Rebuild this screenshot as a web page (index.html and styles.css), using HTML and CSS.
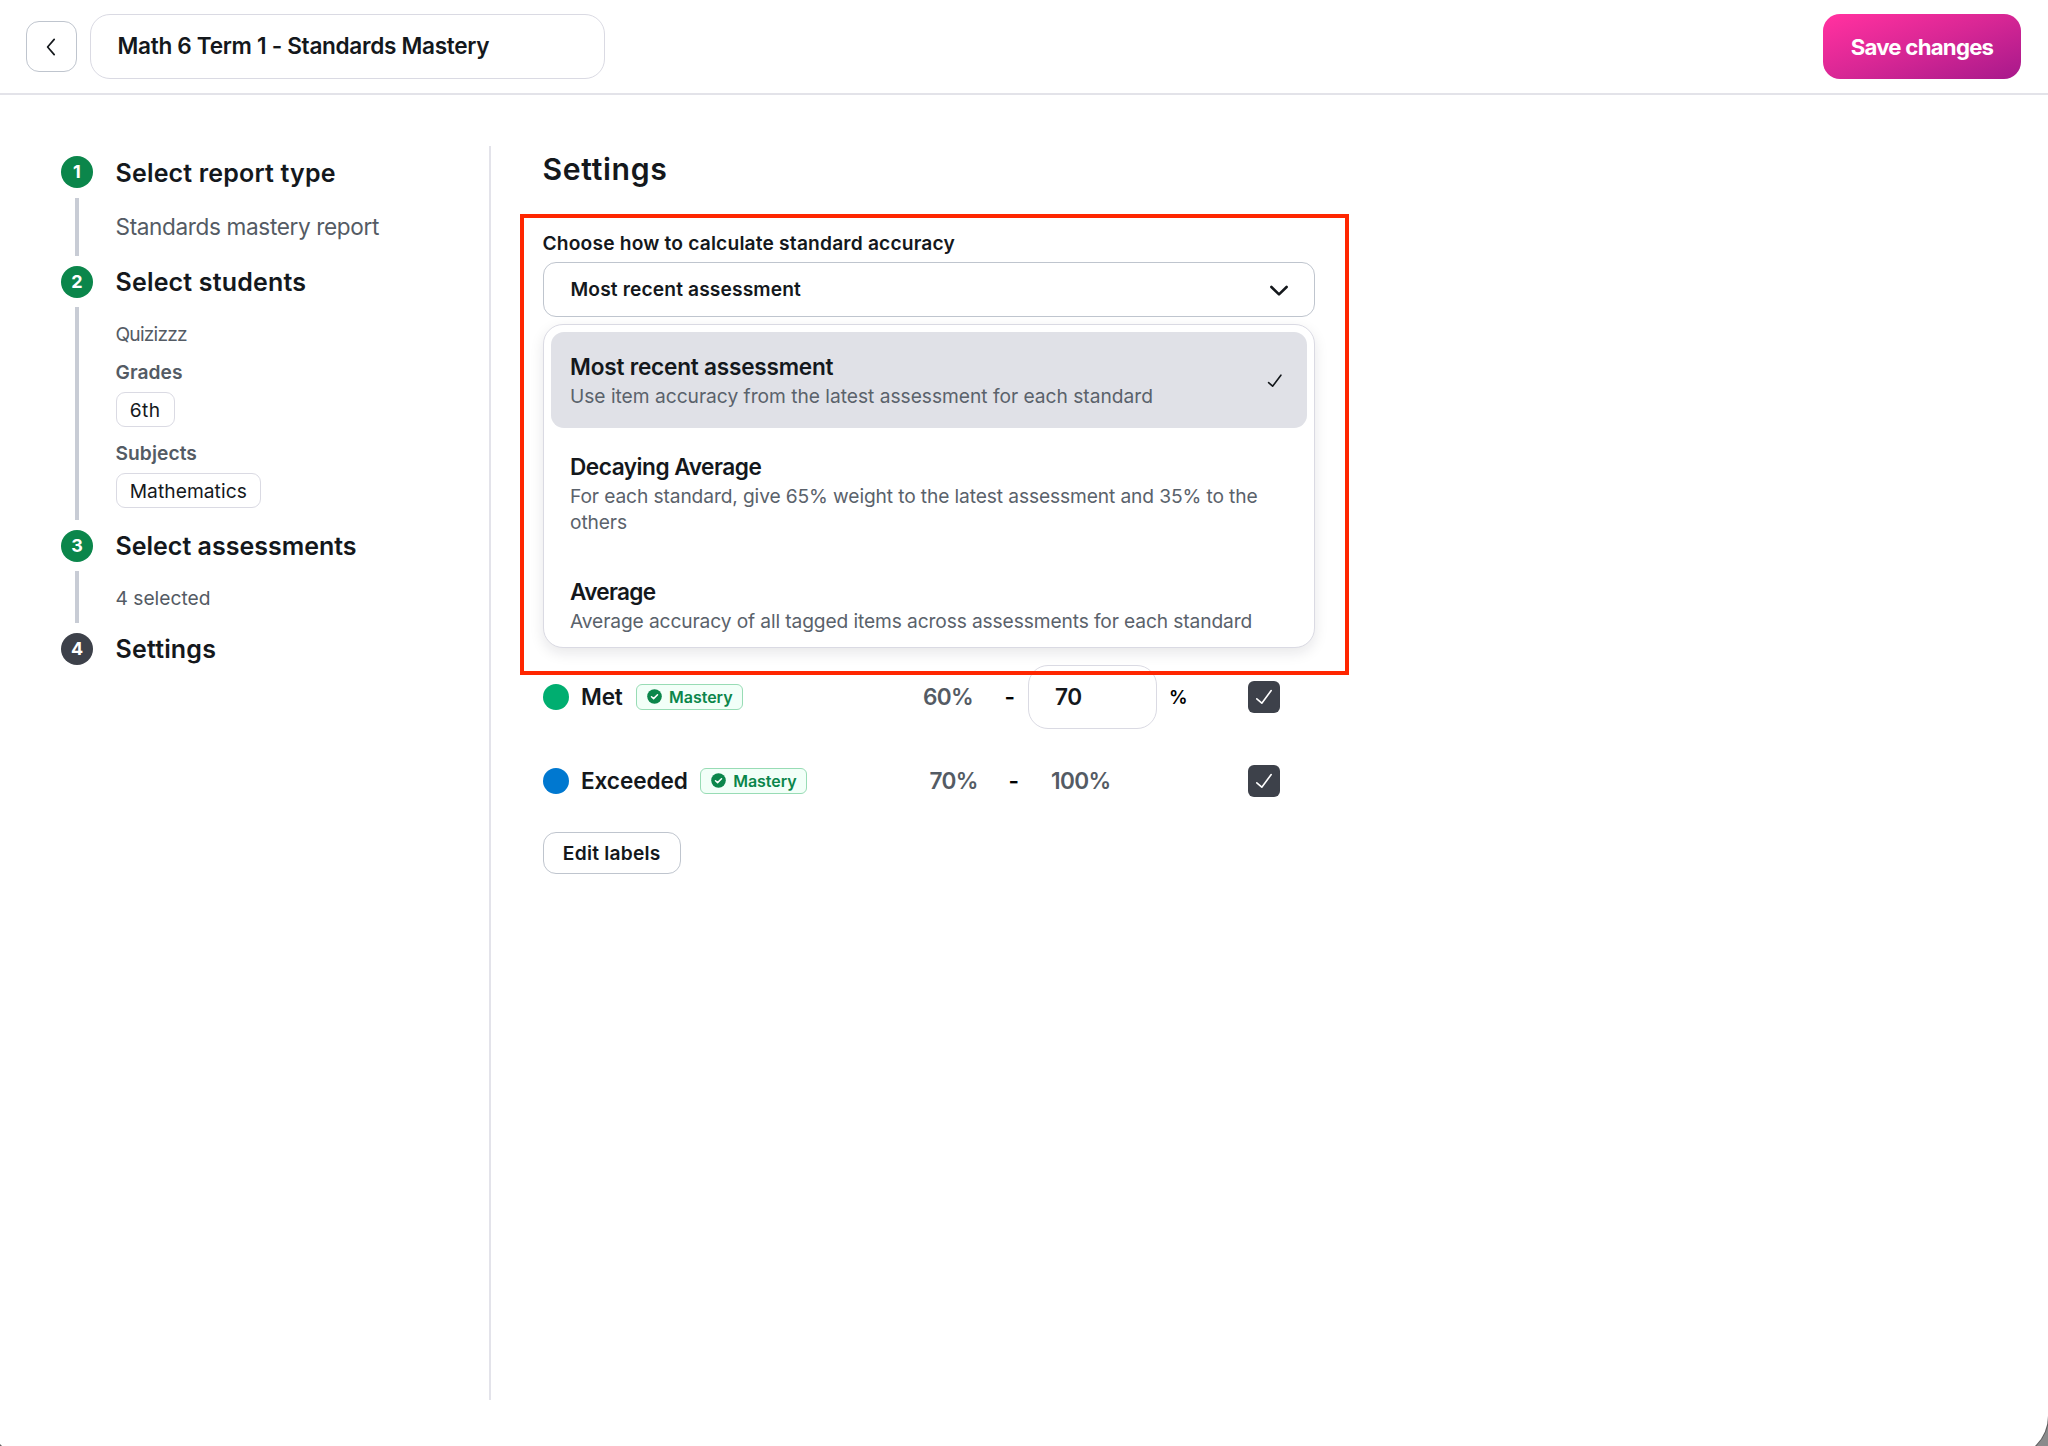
FILE: index.html
```
<!DOCTYPE html>
<html lang="en">
<head>
<meta charset="utf-8">
<title>Math 6 Term 1 - Standards Mastery</title>
<link rel="stylesheet" href="styles.css">
</head>
<body>
<div class="window"></div>
<header class="topbar">
  <button class="back" aria-label="Back">
    <svg width="12" height="20" viewBox="0 0 12 20"><path d="M9.2 2.4 2.6 10l6.6 7.6"/></svg>
  </button>
  <div class="report-name">Math 6 Term 1 - Standards Mastery</div>
  <button class="save">Save changes</button>
</header>
<div class="layout">
  <nav class="steps">
    <section class="step step-type">
      <div class="rail"><span class="num">1</span><span class="line"></span></div>
      <div class="step-body">
        <h2>Select report type</h2>
        <p class="detail detail-lg">Standards mastery report</p>
      </div>
    </section>
    <section class="step step-students">
      <div class="rail"><span class="num">2</span><span class="line"></span></div>
      <div class="step-body">
        <h2>Select students</h2>
        <p class="detail school">Quizizzz</p>
        <h3>Grades</h3>
        <span class="pill pill-grade">6th</span>
        <h3>Subjects</h3>
        <span class="pill">Mathematics</span>
      </div>
    </section>
    <section class="step step-assessments">
      <div class="rail"><span class="num">3</span><span class="line"></span></div>
      <div class="step-body">
        <h2 class="tight">Select assessments</h2>
        <p class="detail">4 selected</p>
      </div>
    </section>
    <section class="step">
      <div class="rail"><span class="num current">4</span></div>
      <div class="step-body"><h2>Settings</h2></div>
    </section>
  </nav>
  <main class="settings">
    <h1>Settings</h1>
    <div class="field-label">Choose how to calculate standard accuracy</div>
    <div class="select-wrap">
      <div class="select">
        <span>Most recent assessment</span>
        <svg width="20" height="14" viewBox="0 0 20 14"><path d="m2.4 3 7.6 7.4L17.600 3"/></svg>
      </div>
      <div class="menu">
        <div class="option selected">
          <div>
            <div class="option-title">Most recent assessment</div>
            <div class="option-desc">Use item accuracy from the latest assessment for each standard</div>
          </div>
          <svg class="tick" width="16" height="16" viewBox="0 0 16 16"><path d="m1.600 9.600 4 3.600 8.300-11"/></svg>
        </div>
        <div class="option">
          <div>
            <div class="option-title decaying">Decaying Average</div>
            <div class="option-desc dense">For each standard, give 65% weight to the latest assessment and 35% to the<br>others</div>
          </div>
        </div>
        <div class="option">
          <div>
            <div class="option-title average">Average</div>
            <div class="option-desc dense">Average accuracy of all tagged items across assessments for each standard</div>
          </div>
        </div>
      </div>
      <div class="highlight"></div>
    </div>
    <div class="bands">
      <div class="band">
        <div class="band-name"><span class="dot met"></span><span class="name name-met">Met</span>
          <span class="badge"><svg width="15" height="15" viewBox="0 0 15 15"><circle cx="7.500" cy="7.500" r="7.300"/><path d="m4.500 7.700 2.100 1.900 3.900-3.900"/></svg>Mastery</span>
        </div>
        <span class="from">60%</span><span class="dash">-</span>
        <div class="to-input">70</div><span class="unit">%</span>
        <span class="check"><svg width="18" height="18" viewBox="0 0 18 18"><path d="m1.800 10.800 5 4.400L16.200 2.600"/></svg></span>
      </div>
      <div class="band band-last">
        <div class="band-name"><span class="dot exceeded"></span><span class="name">Exceeded</span>
          <span class="badge"><svg width="15" height="15" viewBox="0 0 15 15"><circle cx="7.500" cy="7.500" r="7.300"/><path d="m4.500 7.700 2.100 1.900 3.900-3.900"/></svg>Mastery</span>
        </div>
        <span class="from">70%</span><span class="dash">-</span>
        <span class="to">100%</span>
        <span class="check"><svg width="18" height="18" viewBox="0 0 18 18"><path d="m1.800 10.800 5 4.400L16.200 2.600"/></svg></span>
      </div>
    </div>
    <button class="edit">Edit labels</button>
  </main>
</div>
</body>
</html>
```
FILE: styles.css
```
* { box-sizing: border-box; }
html { background: #8a8b8c; }
body {
  position: relative;
  margin: 0;
  height: 1446px;
  overflow: hidden;
  color: #14181c;
  font: 400 19.2px/26px Inter, "Liberation Sans", sans-serif;
}
h1, h2, h3, p { margin: 0; }
button { font-family: inherit; color: inherit; padding: 0; }
svg { display: block; flex: none; fill: none; stroke-linecap: round; stroke-linejoin: round; }

/* Rounded window bottom, desktop showing at the corners */
.window {
  position: absolute;
  z-index: -1;
  inset: -20px 0 -11px -11px;
  background: #fff;
  border-radius: 0 0 41px 41px;
  box-shadow: 0 0 0 1px #5d5e5f;
}

.topbar {
  display: flex;
  align-items: center;
  height: 95px;
  padding: 0 27px 0 26px;
  border-bottom: 2px solid #e3e3e9;
}
.back {
  display: flex;
  align-items: center;
  justify-content: center;
  width: 51px;
  height: 51px;
  padding-right: 2px;
  border: 1px solid #bfc5ce;
  border-radius: 13px;
  background: #fff;
}
.back svg { stroke: #14181c; stroke-width: 1.700; }
.report-name {
  width: 515px;
  height: 65px;
  margin-left: 13px;
  padding-left: 26.500px;
  border: 1px solid #dadae3;
  border-radius: 20px;
  font-size: 22.600px;
  font-weight: 600;
  line-height: 62px;
  letter-spacing: -.31px;
}
.save {
  width: 198px;
  height: 65px;
  margin-left: auto;
  padding-bottom: 1px;
  border: 0;
  border-radius: 17px;
  background: linear-gradient(160deg, #ff309f 5%, #d92795 48%, #a7198b 100%);
  color: #fff;
  font-size: 22.200px;
  font-weight: 700;
  letter-spacing: -.75px;
}

.layout { display: flex; padding-top: 51px; }
.steps {
  width: 491px;
  height: 1254px;
  padding: 10px 0 0 61px;
  border-right: 2px solid #e3e3ea;
}
.step { display: flex; gap: 22.500px; }
.step-type { height: 109.500px; }
.step-students { height: 264px; }
.step-assessments { height: 103px; }
.rail { display: flex; flex-direction: column; align-items: center; width: 32px; }
.num {
  width: 32px;
  height: 32px;
  border-radius: 50%;
  background: #0b864b;
  color: #fff;
  font-size: 18px;
  font-weight: 700;
  line-height: 32px;
  text-align: center;
}
.current { background: #3d414a; }
.line { flex: 1; width: 3.300px; margin: 9.500px 0; background: #c8ccd5; }
.step-body { padding-top: .5px; }
h2 { font-size: 25px; font-weight: 600; line-height: 32.500px; letter-spacing: .18px; }
.tight { letter-spacing: 0; }
.detail { margin-top: 22px; color: #545b64; }
.detail-lg { margin-top: 21.500px; font-size: 22.600px; line-height: 32px; letter-spacing: -.37px; }
.school { letter-spacing: -.8px; }
h3 { margin-top: 12.800px; color: #545b64; font-size: 19.200px; font-weight: 600; line-height: 26px; letter-spacing: .07px; }
.pill {
  display: block;
  width: fit-content;
  height: 35.500px;
  margin-top: 6.500px;
  padding: 0 13.500px 0 13.200px;
  border: 1px solid #dadae3;
  border-radius: 9px;
  line-height: 34px;
  letter-spacing: .06px;
}
.pill-grade { letter-spacing: .5px; }

.settings { width: 824px; padding: 3px 0 0 51.500px; }
h1 { font-size: 30.200px; font-weight: 600; line-height: 40px; letter-spacing: .66px; }
.field-label { margin: 40.700px 0 6.300px; font-weight: 600; letter-spacing: .18px; }
.select-wrap { position: relative; }
.select {
  display: flex;
  align-items: center;
  justify-content: space-between;
  height: 55px;
  padding: 0 25px 0 27px;
  border: 1px solid #bfc5ce;
  border-radius: 13px;
  font-weight: 600;
  letter-spacing: .13px;
}
.select svg { margin-top: 3px; stroke: #14181c; stroke-width: 2.600; }
.menu {
  position: absolute;
  top: 62px;
  left: 0;
  right: 0;
  height: 324.500px;
  padding: 7px;
  overflow: hidden;
  border: 1px solid #dadae3;
  border-radius: 20px;
  background: #fff;
  box-shadow: 0 5px 14px rgba(20, 24, 40, .1);
}
.option {
  display: flex;
  align-items: center;
  justify-content: space-between;
  margin-bottom: 3.200px;
  padding: 20.500px 24px 18.500px 19.500px;
  border-radius: 13px;
  white-space: nowrap;
}
.selected { background: #e0e1e7; }
.tick { stroke: #14181c; stroke-width: 1.600; }
.option-title { font-size: 22.600px; font-weight: 600; line-height: 30.500px; letter-spacing: -.21px; }
.decaying { letter-spacing: -.47px; }
.average { letter-spacing: -.7px; }
.option-desc { margin-top: 1.500px; color: #5a626b; line-height: 25.500px; letter-spacing: -.02px; }
.dense { letter-spacing: -.12px; }
.highlight {
  position: absolute;
  top: -48px;
  left: -22.500px;
  width: 829px;
  height: 461.500px;
  border: 4px solid #ff2600;
}

.bands { display: flex; flex-direction: column; gap: 19px; margin-top: 348px; }
.band { display: flex; align-items: center; height: 64.500px; font-size: 22.600px; font-weight: 600; }
.band + .band { margin-top: .5px; }
.band-name { display: flex; align-items: center; width: 380.500px; }
.band-last .band-name { width: 387px; }
.dot { width: 26px; height: 26px; margin-right: 12.500px; border-radius: 50%; }
.met { background: #00ae70; }
.exceeded { background: #0078d0; }
.name { margin-right: 12.500px; padding-bottom: 1px; letter-spacing: -.1px; }
.name-met { margin-right: 13.500px; letter-spacing: -.2px; }
.badge {
  display: flex;
  align-items: center;
  gap: 7px;
  width: 107px;
  height: 26px;
  padding: 0 0 1px 10px;
  border: 1px solid #98dcb5;
  border-radius: 6px;
  background: #f2fff8;
  color: #0b864b;
  font-size: 16px;
  letter-spacing: -.04px;
}
.badge circle { fill: #0b864b; }
.badge path { stroke: #fff; stroke-width: 1.500; }
.from, .to { color: #545b64; letter-spacing: -.65px; padding-bottom: 1px; }
.from { width: 81.500px; }
.band-last .from { width: 79px; }
.dash { width: 23.500px; color: #000; }
.band-last .dash { width: 42.500px; }
.to { width: 196.500px; }
.to-input {
  width: 129px;
  height: 64.500px;
  padding-left: 26px;
  border: 1px solid #dadae3;
  border-radius: 20px;
  line-height: 61px;
  letter-spacing: -.5px;
}
.unit { width: 91px; padding-left: 12px; color: #000; font-size: 18.500px; }
.check {
  display: flex;
  align-items: center;
  justify-content: center;
  width: 32px;
  height: 32px;
  border-radius: 6px;
  background: #3d414a;
}
.check svg { stroke: #fff; stroke-width: 1.600; }
.edit {
  width: 138.500px;
  height: 42px;
  margin-top: 19px;
  border: 1px solid #bfc5ce;
  border-radius: 13px;
  background: #fff;
  font-size: 19.200px;
  font-weight: 600;
  letter-spacing: .24px;
}
```
